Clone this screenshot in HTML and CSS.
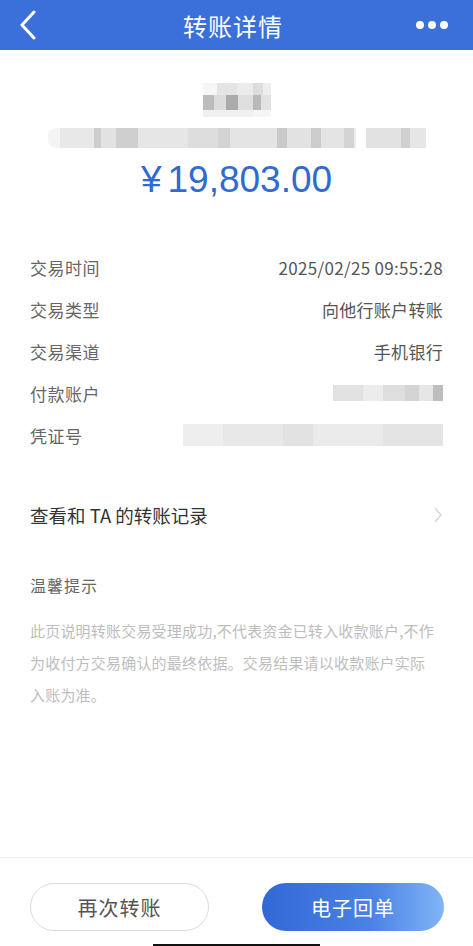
FILE: index.html
```html
<!DOCTYPE html>
<html lang="zh-CN">
<head>
    <meta charset="UTF-8">
    <meta name="viewport" content="width=device-width, initial-scale=1.0">
    <title>转账详情</title>
    <link rel="stylesheet" href="styles.css">
</head>
<body>
    <header class="topbar">
        <svg class="back" width="20" height="30" viewBox="0 0 20 30">
            <polyline points="16,2 4,15 16,28" fill="none" stroke="#fff" stroke-width="3" stroke-linecap="round" stroke-linejoin="round"/>
        </svg>
        <h1>转账详情</h1>
        <svg class="more" width="32" height="10" viewBox="0 0 32 10">
            <circle cx="4" cy="5" r="4" fill="#fff"/>
            <circle cx="16" cy="5" r="4" fill="#fff"/>
            <circle cx="28" cy="5" r="4" fill="#fff"/>
        </svg>
    </header>

    <main class="content">
        <div class="payee">
            <div class="blur-name">
                <span class="nm-top"></span>
                <span class="nm-mid"></span>
                <span class="nm-bot"></span>
            </div>
            <div class="blur-addr"></div>
            <div class="amount">¥<span>19,803.00</span></div>
        </div>

        <div class="details">
            <div class="row"><span class="label">交易时间</span><span class="value">2025/02/25 09:55:28</span></div>
            <div class="row"><span class="label">交易类型</span><span class="value">向他行账户转账</span></div>
            <div class="row"><span class="label">交易渠道</span><span class="value">手机银行</span></div>
            <div class="row"><span class="label">付款账户</span><span class="blur-acct"></span></div>
            <div class="row"><span class="label">凭证号</span><span class="blur-voucher"></span></div>
        </div>

        <a class="record" href="#">
            <span>查看和 TA 的转账记录</span>
            <svg width="10" height="16" viewBox="0 0 10 16">
                <polyline points="2,1 8,8 2,15" fill="none" stroke="#d4d4d4" stroke-width="1.3"/>
            </svg>
        </a>

        <div class="tips">
            <h3>温馨提示</h3>
            <p>此页说明转账交易受理成功,不代表资金已转入收款账户,不作为收付方交易确认的最终依据。交易结果请以收款账户实际入账为准。</p>
        </div>
    </main>

    <footer class="actions">
        <button class="btn-again">再次转账</button>
        <button class="btn-receipt">电子回单</button>
    </footer>
    <div class="home-bar"></div>
</body>
</html>
```

FILE: styles.css
```css
html, body {
    margin: 0;
    height: 100%;
}

body {
    display: flex;
    flex-direction: column;
    background: #fff;
    font-family: "Noto Sans CJK SC", "Noto Sans", sans-serif;
    color: #555;
}

.topbar {
    display: grid;
    grid-template-columns: 1fr auto 1fr;
    align-items: center;
    height: 50px;
    padding: 0 25px 0 18px;
    background-color: #3b6fd9;
}

.topbar h1 {
    margin: 0;
    font-size: 24px;
    font-weight: normal;
    color: #fff;
    letter-spacing: 1px;
}

.more {
    justify-self: end;
}

.content {
    flex: 1;
    padding: 0 30px;
}

/* payee block, blurred in the source */
.payee {
    display: flex;
    flex-direction: column;
    align-items: center;
}

.blur-name {
    display: flex;
    flex-direction: column;
    width: 68px;
    margin-top: 33px;
}

.blur-name span {
    display: block;
}

.nm-top {
    height: 12px;
    background: linear-gradient(to right, #f6f6f6 0 14px, #e4e4e4 14px 34px, #ececec 34px 50px, #dcdcdc 50px 60px, #eeeeee 60px);
}

.nm-mid {
    height: 15px;
    background: linear-gradient(to right, #bcbcbc 0 11px, #dcdcdc 11px 23px, #ababab 23px 35px, #dedede 35px 50px, #b9b9b9 50px 58px, #e2e2e2 58px);
}

.nm-bot {
    height: 7px;
    background: linear-gradient(to right, #f0f0f0 0 50px, #f6f6f6 50px);
}

.blur-addr {
    width: 378px;
    height: 20px;
    margin-top: 11px;
    border-radius: 8px 0 0 8px;
    background: linear-gradient(to right,
        #f4f4f4 0 12px, #e8e8e8 12px 46px, #cdcdcd 46px 53px, #e2e2e2 53px 68px,
        #cfcfcf 68px 90px, #e6e6e6 90px 140px, #dddddd 140px 170px, #d3d3d3 170px 182px,
        #e4e4e4 182px 229px, #cacaca 229px 239px, #e2e2e2 239px 263px, #cccccc 263px 273px,
        #e4e4e4 273px 296px, #d4d4d4 296px 306px, #ececec 306px 308px, #fff 308px 318px,
        #e2e2e2 318px 353px, #d0d0d0 353px 362px, #e6e6e6 362px);
}

.amount {
    margin-top: 9px;
    font-family: "Liberation Sans", Arial, sans-serif;
    font-size: 37px;
    line-height: 46px;
    color: #2f6bd0;
}

.amount span {
    margin-left: 6px;
}

.details {
    margin-top: 43px;
}

.row {
    display: flex;
    justify-content: space-between;
    align-items: center;
    height: 42px;
    font-size: 17px;
}

.label {
    color: #666;
    letter-spacing: 0.5px;
}

.value {
    color: #555;
    letter-spacing: 0.3px;
}

.blur-acct {
    width: 110px;
    height: 16px;
    background: linear-gradient(to right, #e2e2e2 0 30px, #ececec 30px 50px, #dedede 50px 72px, #d4d4d4 72px 86px, #e6e6e6 86px 100px, #bdbdbd 100px);
}

.blur-voucher {
    width: 260px;
    height: 22px;
    background: linear-gradient(to right, #eeeeee 0 40px, #e8e8e8 40px 100px, #e2e2e2 100px 130px, #ebebeb 130px 200px, #e4e4e4 200px);
}

.record {
    display: flex;
    justify-content: space-between;
    align-items: center;
    height: 50px;
    margin-top: 34px;
    font-size: 18.5px;
    color: #333;
    text-decoration: none;
}

.tips {
    margin-top: 33px;
}

.tips h3 {
    margin: 0;
    font-size: 16px;
    line-height: 24px;
    font-weight: normal;
    color: #666;
    letter-spacing: 1px;
}

.tips p {
    max-width: 409px;
    margin: 18px 0 0;
    font-size: 15px;
    line-height: 32px;
    color: #bdbdbd;
    letter-spacing: 0.2px;
}

.actions {
    display: flex;
    justify-content: space-between;
    padding: 25px 29px 13px 30px;
    border-top: 1px solid #f0f0f0;
}

.actions button {
    height: 48px;
    border-radius: 24px;
    font-family: "Noto Sans CJK SC", sans-serif;
    font-size: 20px;
    letter-spacing: 1px;
    cursor: pointer;
}

.btn-again {
    width: 179px;
    border: 1px solid #dcdcdc;
    background-color: #fff;
    color: #555;
}

.btn-receipt {
    width: 182px;
    border: none;
    background: linear-gradient(to right, #3168d6 0%, #4b82e4 60%, #80b4f6 100%);
    color: #fff;
}

.home-bar {
    width: 167px;
    height: 2px;
    margin: 0 auto;
    background-color: #111;
}
```
